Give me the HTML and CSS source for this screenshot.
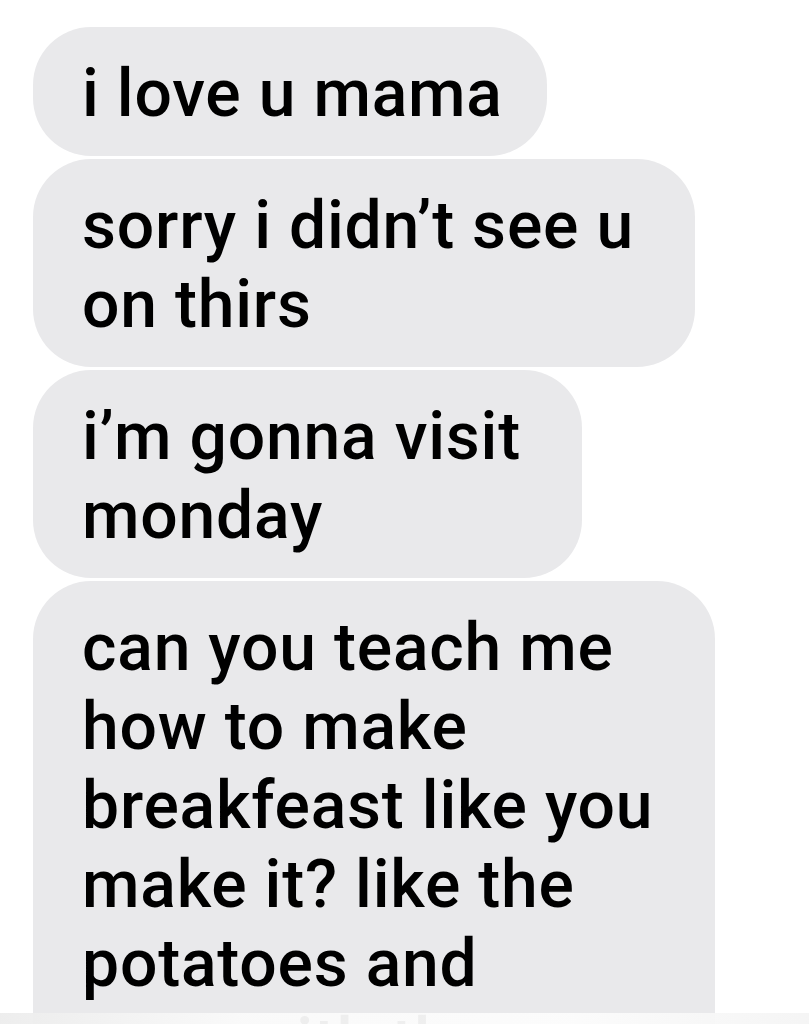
FILE: index.html
```html
<!DOCTYPE html>
<html lang="en">
<head>
    <meta charset="UTF-8">
    <meta name="viewport" content="width=device-width, initial-scale=1.0">
    <title>Messages</title>
    <link rel="stylesheet" href="styles.css">
</head>
<body>
    <div class="thread">
        <div class="bubble">i love u mama</div>
        <div class="bubble">sorry i didn’t see u&nbsp;<br>on thirs</div>
        <div class="bubble">i’m gonna visit&nbsp;<br>monday</div>
        <div class="bubble">can you teach me&nbsp;<br>how to make&nbsp;<br>breakfeast like you&nbsp;<br>make it? like the&nbsp;<br>potatoes and&nbsp;<br>eggs with the</div>
    </div>
    <div class="fade"></div>
</body>
</html>
```
FILE: styles.css
```css
html, body { margin: 0; height: 100%; overflow: hidden; background: #fff; }
body { font-family: Roboto, "Liberation Sans", sans-serif; }
.thread { display: flex; flex-direction: column; align-items: flex-start; gap: 3px; padding: 27px 0 0 33px; }
.bubble { background: #e9e9eb; color: #000; font-size: 66px; font-weight: 500; letter-spacing: 0.8px; line-height: 79px; padding: 27px 44px 23px 49px; border-radius: 58px; }
.fade { position: fixed; left: 0; right: 0; bottom: 0; height: 11px; background: linear-gradient(to right, #ececec, #fafafa 30%, #fcfcfc 70%, #f4f4f4); opacity: 0.95; }
```
